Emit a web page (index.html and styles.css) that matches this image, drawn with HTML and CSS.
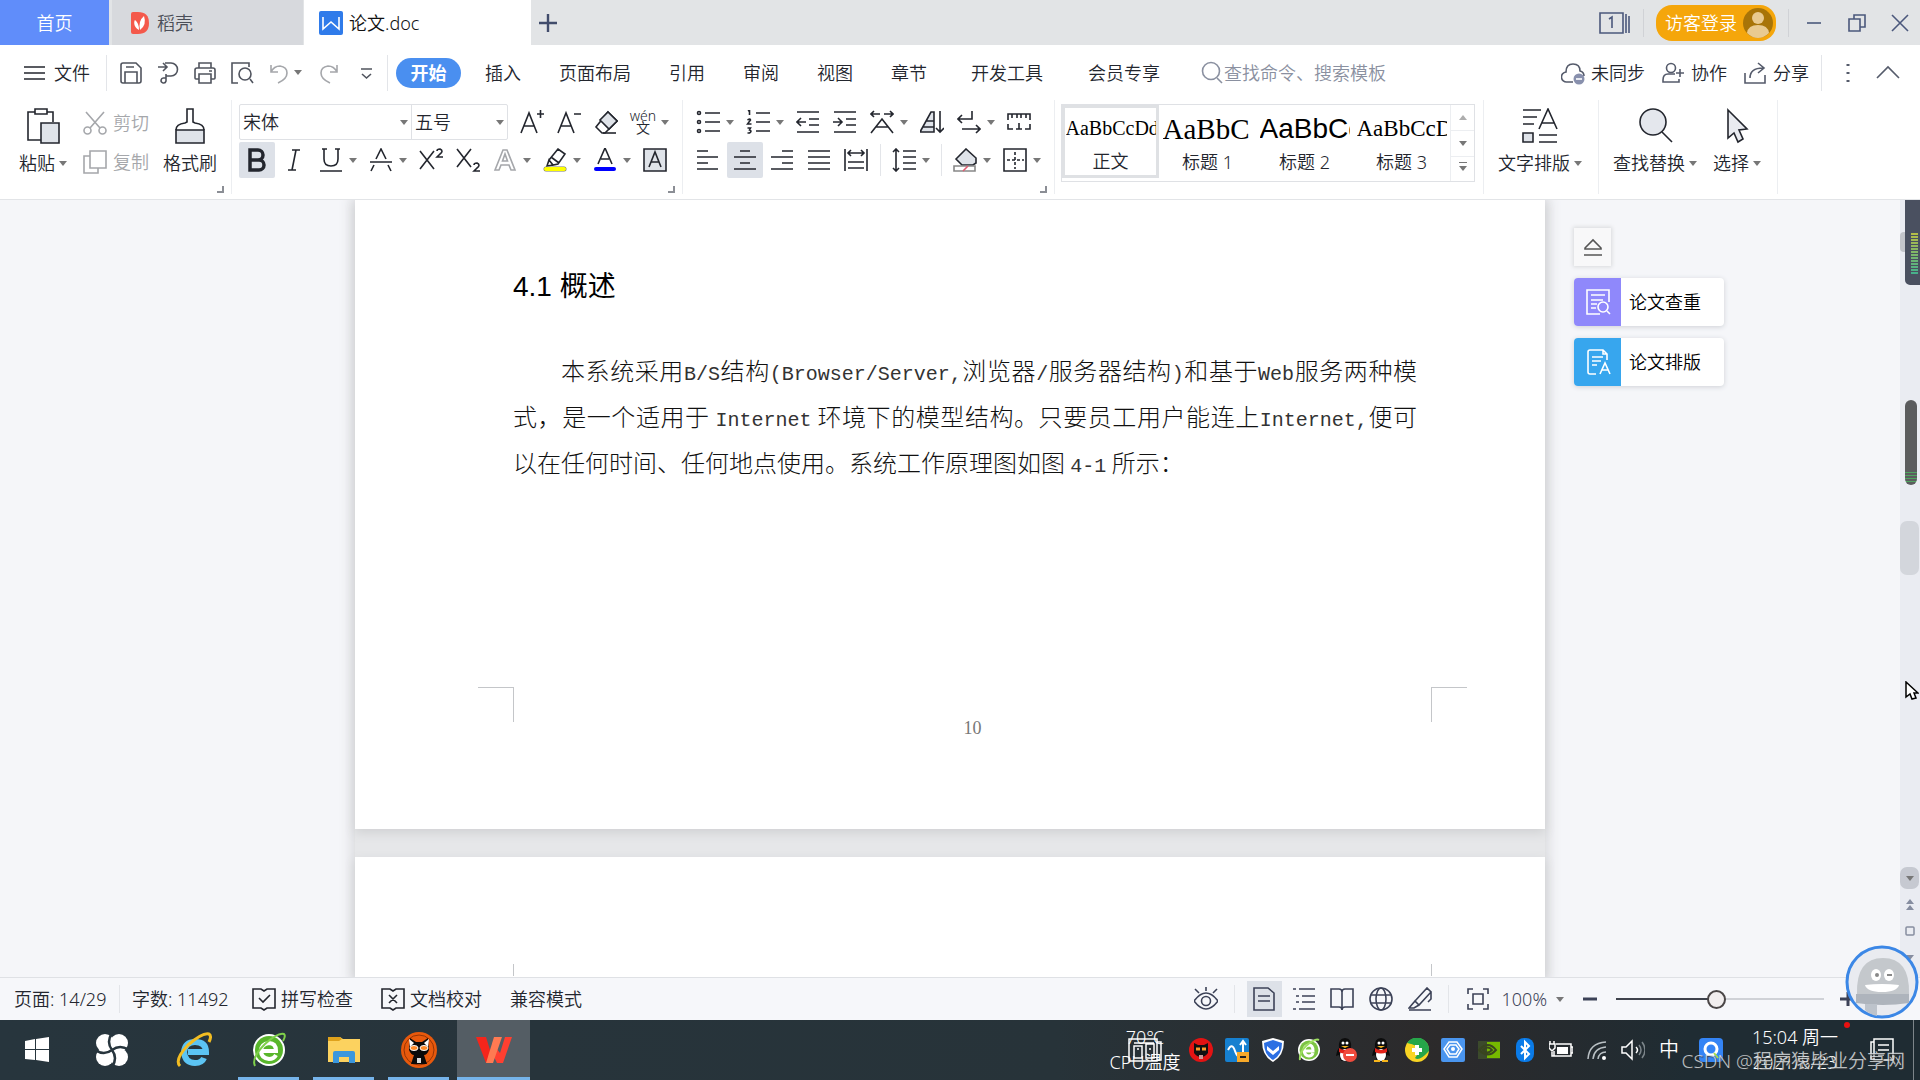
FILE: index.html
```html
<!DOCTYPE html>
<html lang="zh-CN">
<head>
<meta charset="utf-8">
<title>论文.doc</title>
<link rel="stylesheet" href="styles.css">
</head>
<body>
<header class="tabs">
  <button class="tab home">首页</button>
  <button class="tab docer"><svg width="18" height="22" viewBox="0 0 18 22"><path d="M0 2q0-2 2-2h5q11 0 11 11T7 22H2q-2 0-2-2z" fill="#f4594b"/><path d="M8 18C2 15 3 9 4 8q4 3 4 10zM9 18Q7 9 13 4q3 9-4 14z" fill="#fff"/></svg>稻壳</button>
  <button class="tab active"><svg width="24" height="24" viewBox="0 0 24 24"><rect width="24" height="24" rx="2" fill="#2f7bea"/><path d="M4 6v12l8-7 8 7V6" fill="none" stroke="#fff" stroke-width="1.600"/></svg>论文.doc</button>
  <button class="plus" aria-label="新建"><svg width="18" height="18" viewBox="0 0 18 18"><path d="M9 0v18M0 9h18" stroke="#414c6b" stroke-width="2.4"/></svg></button>
  <div class="win">
    <button class="count" aria-label="窗口"><svg width="32" height="24" viewBox="0 0 32 24" class="ln"><path d="M1 2h23v20H1zM27 3v19M30 5v17M10 8l3-2v11"/></svg></button>
    <i class="sep"></i>
    <button class="login">访客登录<svg width="30" height="30" viewBox="0 0 30 30"><circle cx="15" cy="15" r="15" fill="#a87408"/><circle cx="15" cy="10" r="6" fill="#e9ca90"/><path d="M4 25q1-8 11-8t11 8q-5 5-11 5T4 25z" fill="#e9ca90"/></svg></button>
    <i class="sep"></i>
    <button aria-label="最小化"><svg width="18" height="18" viewBox="0 0 18 18" class="ln"><path d="M2 9h14"/></svg></button>
    <button aria-label="还原"><svg width="18" height="18" viewBox="0 0 18 18" class="ln"><path d="M1 5h11v12H1zM6 5V1h11v12h-5"/></svg></button>
    <button aria-label="关闭"><svg width="18" height="18" viewBox="0 0 18 18" class="ln"><path d="M1 1l16 16M17 1L1 17"/></svg></button>
  </div>
</header>

<nav class="menu">
  <button class="file"><svg class="ic" width="22" height="18" viewBox="0 0 22 18"><path d="M0 3h21M0 9h21M0 15h21"/></svg>文件</button>
  <i class="sep"></i>
  <div class="quick">
    <button aria-label="保存"><svg class="ic" viewBox="0 0 24 24"><path d="M2 4q0-2 2-2h13l5 5v13q0 2-2 2H4q-2 0-2-2zM6 22V11h12v11M7 6h8"/></svg></button>
    <button aria-label="输出"><svg class="ic" viewBox="0 0 24 24"><path d="M2 6h8M7 2l4 4-4 4M9 2h6a6.500 6.500 0 0 1 0 13h-5M10 13v7a2.500 2.500 0 1 1-2-3h2"/></svg></button>
    <button aria-label="打印"><svg class="ic" viewBox="0 0 24 24"><path d="M6 7V2h12v5M6 18H3q-1 0-1-1V9q0-2 2-2h16q2 0 2 2v8q0 1-1 1h-3M6 13h12v9H6zM16 10h3"/></svg></button>
    <button aria-label="预览"><svg class="ic" viewBox="0 0 24 24"><path d="M8 22H2V2h17v4M20 18l3 4"/><circle cx="15" cy="13" r="6"/></svg></button>
    <button class="dim" aria-label="撤销"><svg class="ic" viewBox="0 0 24 24"><path d="M4 4v7h7M4 11q3-6 9-6 7 1 7 7t-9 10"/></svg></button>
    <i class="car"></i>
    <button class="dim" aria-label="恢复"><svg class="ic" viewBox="0 0 24 24"><path d="M20 4v7h-7M20 11q-3-6-9-6-7 1-7 7t9 10"/></svg></button>
    <button aria-label="更多"><svg class="ic" viewBox="0 0 24 24"><path d="M7 8h11M8 13l4.500 4 4.500-4"/></svg></button>
  </div>
  <i class="sep"></i>
  <div class="items">
    <button class="on">开始</button><button>插入</button><button>页面布局</button><button>引用</button><button>审阅</button><button>视图</button><button>章节</button><button class="wide">开发工具</button><button class="wide">会员专享</button>
  </div>
  <label class="search"><svg class="ic" viewBox="0 0 24 24"><circle cx="11" cy="10" r="8.500"/><path d="M17 17l5 5"/></svg><input type="text" placeholder="查找命令、搜索模板"></label>
  <div class="share">
    <button><svg class="ic" viewBox="0 0 24 24"><path d="M12 21H6a5 5 0 0 1-1-10Q5 3 12 3t7 7q4 1 4 5"/><circle cx="18" cy="18" r="5.500" fill="#8890ad" stroke="none"/><path d="M15 18h6" stroke="#fff"/></svg>未同步</button>
    <button><svg class="ic" viewBox="0 0 24 24"><circle cx="10" cy="7" r="4.500"/><path d="M14 13H7q-5 0-5 6v2h16v-3M15 12h8M19 8v8"/></svg>协作</button>
    <button><svg class="ic" viewBox="0 0 24 24"><path d="M2 12v10h20v-8M7 17q0-10 13-10M15 2l6 5-6 5"/></svg>分享</button>
  </div>
  <i class="sep"></i>
  <button class="end" aria-label="更多"><svg class="ic" viewBox="0 0 24 24"><path d="M12 3v2M12 11v2M12 19v2" stroke-width="3"/></svg></button>
  <button class="end" aria-label="折叠"><svg class="ic" viewBox="0 0 24 24"><path d="M1 17L12 6l11 11"/></svg></button>
</nav>

<section class="ribbon">
  <div class="clip">
    <button class="big"><svg class="ic" width="36" height="36" viewBox="0 0 36 36"><path d="M10 4H3v28h13M22 4h6v10M10 1h12v5H10z"/><path d="M16 15h18v20H16z" fill="#dfe3e9"/></svg><span>粘贴<i class="car"></i></span></button>
    <div class="two dim">
      <button><svg class="ic" viewBox="0 0 24 24"><path d="M3 1l14 16M21 1L7 17"/><circle cx="4.500" cy="19.500" r="3.500"/><circle cx="19.500" cy="19.500" r="3.500"/></svg>剪切</button>
      <button><svg class="ic" viewBox="0 0 24 24"><path d="M7 1h16v17H7zM7 6H1v17h14v-5"/></svg>复制</button>
    </div>
    <button class="big painter"><svg class="ic" width="36" height="36" viewBox="0 0 36 36"><path d="M4 22h28v13H4z" fill="#dfe3e9"/><path d="M4 22q0-6 9-7l2-1V1h6v13l2 1q9 1 9 7"/></svg><span>格式刷</span></button>
    <i class="corner"></i>
  </div>
  <div class="group">
    <div class="row">
      <div class="pick"><label class="name"><select aria-label="字体"><option>宋体</option></select></label><label class="size"><select aria-label="字号"><option>五号</option></select></label></div>
      <button class="b first" aria-label="增大字号"><svg class="ic" viewBox="0 0 24 24"><path d="M1 23L9 3l8 20M4 16h10M17 4h7M20.500 0v8"/></svg></button>
      <button class="b" aria-label="减小字号"><svg class="ic" viewBox="0 0 24 24"><path d="M1 23L9 3l8 20M4 16h10M17 4h7"/></svg></button>
      <button class="b" aria-label="清除格式"><svg class="ic" viewBox="0 0 24 24"><path d="M14 2l9 9-12 12H8l-6-6z"/><path d="M14 2l9 9-8 8-9-9z" fill="#dfe3e9"/><path d="M9 23h13"/></svg></button>
      <button class="d wen"><span>wén<br>文</span><i class="car"></i></button>
    </div>
    <div class="row">
      <button class="b on" aria-label="加粗"><svg class="ic" viewBox="0 0 24 24"><path d="M5 2h8a5 5 0 0 1 0 10H5zM5 12h9a5 5 0 0 1 0 10H5z" stroke-width="3.500"/></svg></button>
      <button class="b" aria-label="倾斜"><svg class="ic" viewBox="0 0 24 24"><path d="M10 2h8M6 22h8M14 2l-4 20"/></svg></button>
      <button class="d" aria-label="下划线"><svg class="ic" viewBox="0 0 24 24"><path d="M3 1h5M16 1h5M5 1v10q0 7 7 7t7-7V1M1 23h22"/></svg><i class="car"></i></button>
      <button class="d" aria-label="删除线"><svg class="ic" viewBox="0 0 24 24"><path d="M1 14h22M7 11l5-10 5 10M5 17l-3 6M19 17l3 6"/></svg><i class="car"></i></button>
      <button class="b" aria-label="上标"><svg class="ic" viewBox="0 0 24 24"><path d="M1 3l14 18M15 3L1 21M18 3q0-2 3-2 4 2 0 5l-3 3h6"/></svg></button>
      <button class="b" aria-label="下标"><svg class="ic" viewBox="0 0 24 24"><path d="M1 1l14 18M15 1L1 19M18 17q0-2 3-2 4 2 0 5l-3 3h6"/></svg></button>
      <button class="d dim" aria-label="文字效果"><svg class="ic" viewBox="0 0 24 24"><path d="M2 22L10 2h4l8 20h-4l-2-5H8l-2 5zM9.500 13h5L12 6z"/></svg><i class="car"></i></button>
      <button class="d" aria-label="突出显示"><svg class="ic" viewBox="0 0 24 24"><path d="M6 12L15 1l7 5-7 10-5 1zM6 12l4 5-6 1zM8 9l8 6"/><path d="M3 21h18" stroke="#777" stroke-width="5" stroke-linecap="round"/><path d="M3 21h18" stroke="#ff0" stroke-width="4" stroke-linecap="round"/></svg><i class="car"></i></button>
      <button class="d" aria-label="字体颜色"><svg class="ic" viewBox="0 0 24 24"><path d="M5 16L12 0l7 16M8 11h8"/><path d="M3 21h18" stroke="#00f" stroke-width="4" stroke-linecap="round"/></svg><i class="car"></i></button>
      <button class="b" aria-label="字符底纹"><svg class="ic" viewBox="0 0 24 24"><path d="M1 1h22v22H1z" fill="#dfe3e9"/><path d="M6 19l6-15 6 15M8 14h8"/></svg></button>
    </div>
    <i class="corner"></i>
  </div>
  <div class="group">
    <div class="row">
      <button class="d" aria-label="项目符号"><svg class="ic" viewBox="0 0 24 24"><path d="M9 3h15M9 12h15M9 21h15"/><circle cx="3" cy="3" r="1.500"/><circle cx="3" cy="12" r="1.500"/><circle cx="3" cy="21" r="1.500"/></svg><i class="car"></i></button>
      <button class="d" aria-label="编号"><svg class="ic" viewBox="0 0 24 24"><path d="M10 3h14M10 12h14M10 21h14M2 1l1.500-1v5M1.500 10q3-2 3 0l-3 4h4M1.500 18h3l-1 2q3 1 0 3h-2"/></svg><i class="car"></i></button>
      <button class="b" aria-label="减少缩进"><svg class="ic" viewBox="0 0 24 24"><path d="M1 2h22M13 9h10M13 15h10M1 22h22M1 12h9M5 8l-4 4 4 4"/></svg></button>
      <button class="b" aria-label="增加缩进"><svg class="ic" viewBox="0 0 24 24"><path d="M1 2h22M13 9h10M13 15h10M1 22h22M0 12h9M5 8l4 4-4 4"/></svg></button>
      <button class="d" aria-label="字符缩放"><svg class="ic" viewBox="0 0 24 24"><path d="M1 23l11-14 11 14M6 17h12M1 4h9M14 4h9M4 1L1 4l3 3M20 1l3 3-3 3"/></svg><i class="car"></i></button>
      <button class="b" aria-label="排序"><svg class="ic" viewBox="0 0 24 24"><path d="M0 22L11 2h3v20zM6 11h8M3 17h11" fill="#dfe3e9"/><path d="M20 1v21M16 18l4 4 4-4"/></svg></button>
      <button class="d" aria-label="换行"><svg class="ic" viewBox="0 0 24 24"><path d="M15 1v8H1M5 5L1 9l4 4M5 19h18M19 15l4 4-4 4"/></svg><i class="car"></i></button>
      <button class="b" aria-label="标尺"><svg class="ic" viewBox="0 0 24 24"><path d="M1 10V4h22v6M5 4v4M10 4v4M14 4v4M19 4v4M1 14v5h5M23 14v5h-5M12 13v6M9 19h6"/></svg></button>
    </div>
    <div class="row">
      <button class="b" aria-label="左对齐"><svg class="ic" viewBox="0 0 24 24"><path d="M1 3h11M1 9h21M1 15h11M1 21h21"/></svg></button>
      <button class="b on" aria-label="居中"><svg class="ic" viewBox="0 0 24 24"><path d="M7 3h10M1 9h22M7 15h10M1 21h22"/></svg></button>
      <button class="b" aria-label="右对齐"><svg class="ic" viewBox="0 0 24 24"><path d="M12 3h11M1 9h22M12 15h11M1 21h22"/></svg></button>
      <button class="b" aria-label="两端对齐"><svg class="ic" viewBox="0 0 24 24"><path d="M1 3h22M1 9h22M1 15h22M1 21h22"/></svg></button>
      <button class="b" aria-label="分散对齐"><svg class="ic" viewBox="0 0 24 24"><path d="M1 1v22M23 1v22M4 5h16M7 2L4 5l3 3M17 2l3 3-3 3M4 14h16M4 20h16"/></svg></button>
      <i class="bar"></i>
      <button class="d" aria-label="行距"><svg class="ic" viewBox="0 0 24 24"><path d="M4 1v22M1 4l3-3 3 3M1 20l3 3 3-3M11 3h13M11 9h13M11 15h13M11 21h13"/></svg><i class="car"></i></button>
      <i class="bar"></i>
      <button class="d" aria-label="底纹"><svg class="ic" viewBox="0 0 24 24"><path d="M3 11L13 1l10 9v5l-3 2H9z" fill="#dfe3e9"/><path d="M1 18h21v5H1z" stroke="#888" fill="#fff"/><path d="M10 23l5-5" stroke="#e05a70"/></svg><i class="car"></i></button>
      <button class="d" aria-label="边框"><svg class="ic" viewBox="0 0 24 24"><path d="M1 1h22v22H1z"/><path d="M12 4v17M4 12h17" stroke-dasharray="3 2"/></svg><i class="car"></i></button>
    </div>
    <i class="corner"></i>
  </div>
  <div class="styles">
    <div class="gallery">
      <button class="style sel"><span class="s1">AaBbCcDd</span>正文</button>
      <button class="style"><span class="s2">AaBbC</span>标题 1</button>
      <button class="style"><span class="s3">AaBbCc</span>标题 2</button>
      <button class="style"><span class="s4">AaBbCcDd</span>标题 3</button>
      <div class="updown"><button aria-label="上"><i class="car up"></i></button><button aria-label="下"><i class="car"></i></button><button aria-label="展开"><i class="car line"></i></button></div>
    </div>
  </div>
  <div class="tail one">
    <button class="big"><svg class="ic" width="36" height="36" viewBox="0 0 36 36"><path d="M1 2h18M1 9h14M1 16h11M17 21l9-20 9 20M20 15h12M17 27h18M17 34h18"/><path d="M1 25h10v9H1z" fill="#dfe3e9"/></svg><span>文字排版<i class="car"></i></span></button>
  </div>
  <div class="tail pair">
    <button class="big"><svg class="ic" width="36" height="36" viewBox="0 0 36 36"><circle cx="16" cy="14" r="13" fill="#e4e7ed"/><path d="M25 24l10 10"/></svg><span>查找替换<i class="car"></i></span></button>
    <button class="big"><svg class="ic" width="36" height="36" viewBox="0 0 36 36"><path d="M9 2l19 19-8 1 4 9-5 3-4-9-6 5z" fill="#e9ebf0"/></svg><span>选择<i class="car"></i></span></button>
  </div>
</section>

<main class="work">
  <div class="pages">
    <article class="page">
      <div class="text">
        <h1>4.1 概述</h1>
        <p><span class="full indent">本系统采用<b>B/S</b>结构<b>(Browser/Server,</b>浏览器<b>/</b>服务器结构<b>)</b>和基于<b>Web</b>服务两种模</span><span class="full">式，是一个适用于 <b>Internet</b> 环境下的模型结构。只要员工用户能连上<b>Internet,</b>便可</span><span>以在任何时间、任何地点使用。系统工作原理图如图 <b>4-1</b> 所示：</span></p>
      </div>
      <div class="marks"><i></i><span class="num">10</span><i class="r"></i></div>
    </article>
    <article class="page next"><div class="marks"><i></i><i class="r"></i></div></article>
  </div>
  <aside class="float">
    <button class="eject" aria-label="收起"><svg class="ic" width="20" height="20" viewBox="0 0 20 20"><path d="M2 11l8-8 8 8v1H2zM1 18h18"/></svg></button>
    <button class="card"><i class="purple"><svg class="ic" width="26" height="26" viewBox="0 0 26 26"><path d="M15 25H2V1h22v12M6 6h14M6 11h12M6 15h6M6 19h5M22 22l3 3"/><circle cx="18" cy="18" r="5"/></svg></i>论文查重</button>
    <button class="card"><i class="blue"><svg class="ic" width="26" height="26" viewBox="0 0 26 26"><path d="M11 25H5q-2 0-2-2V3q0-2 2-2h13l4 4v6M18 1v4h4M7 8h11M7 12h9M7 16h5M15 25l5-11 5 11M17 21h6"/></svg></i>论文排版</button>
  </aside>
  <div class="scroll">
    <i class="nub"></i><i class="meter"></i><i class="gauge"></i><i class="thumb"></i>
    <svg class="cursor" width="14" height="20" viewBox="0 0 14 20"><path d="M1 1v15l4-3 2 5 4-1-2-5h4z" fill="#fff" stroke="#000" stroke-width="1.500"/></svg>
    <button class="down" aria-label="下"><i class="car"></i></button>
    <svg class="pagers" width="14" height="74" viewBox="0 0 14 74"><path d="M3 6l4-5 4 5zM3 12l4-5 4 5zM3 57h8l-4 5z" fill="#868da0"/><rect x="3" y="29" width="8" height="8" rx="1" fill="none" stroke="#868da0" stroke-width="1.500"/></svg>
  </div>
</main>

<footer class="status">
  <span class="pg">页面: 14/29</span><i class="sep"></i><span class="wc">字数: 11492</span>
  <button class="spell"><svg class="ic" viewBox="0 0 24 24"><path d="M1 2h8l3 2 3-2h8v19h-8l-3 2-3-2H1zM7 11l4 4 7-7"/></svg>拼写检查</button>
  <button class="proof"><svg class="ic" viewBox="0 0 24 24"><path d="M1 2h8l3 2 3-2h8v19h-8l-3 2-3-2H1zM8 8l8 8M16 8l-8 8"/></svg>文档校对</button>
  <span>兼容模式</span>
  <div class="views">
    <button class="eye" aria-label="护眼"><svg class="ic" viewBox="0 0 24 24"><path d="M0 14q12-16 24 0-12 16-24 0zM12 4V0M5 6L1 2M19 6l4-4"/><circle cx="12" cy="14" r="4.500"/></svg></button>
    <i class="sep"></i>
    <button class="on" aria-label="页面视图"><svg class="ic" viewBox="0 0 24 24"><path d="M2 1h14l6 5v17H2zM6 9h12M6 14h12"/></svg></button>
    <button aria-label="大纲"><svg class="ic" viewBox="0 0 24 24"><path d="M2 2h3M8 2h16M5 9h3M11 9h13M5 15h3M11 15h13M2 22h3M8 22h16"/></svg></button>
    <button aria-label="阅读"><svg class="ic" viewBox="0 0 24 24"><path d="M1 2h8q3 0 3 3 0-3 3-3h8v18h-8q-3 0-3 3 0-3-3-3H1zM12 5v17"/></svg></button>
    <button aria-label="Web"><svg class="ic" viewBox="0 0 24 24"><circle cx="12" cy="12" r="11"/><ellipse cx="12" cy="12" rx="5" ry="11"/><path d="M2 8h20M2 16h20"/></svg></button>
    <button aria-label="写作"><svg class="ic" viewBox="0 0 24 24"><path d="M7 14L19 1l4 4-12 13zM7 14l4 4-5 3H1zM1 23h22M23 5v7l-3 3"/></svg></button>
    <i class="sep"></i>
    <button class="fit" aria-label="适应"><svg class="ic" viewBox="0 0 24 24"><path d="M2 7V2h5M17 2h5v5M22 17v5h-5M7 22H2v-5M7 7h10v10H7z"/></svg></button>
    <button class="pct">100%<i class="car"></i></button>
    <button class="zo" aria-label="缩小"><svg width="16" height="16" viewBox="0 0 16 16"><path d="M1 8h14" stroke="#3c4257" stroke-width="3"/></svg></button>
    <input type="range" min="0" max="100" value="48" aria-label="缩放">
    <button class="zi" aria-label="放大"><svg width="16" height="16" viewBox="0 0 16 16"><path d="M0 8h16M8 1v14" stroke="#3c4257" stroke-width="3"/></svg></button>
  </div>
</footer>

<footer class="taskbar">
  <div class="apps">
    <button aria-label="开始"><svg width="26" height="26" viewBox="0 0 26 26"><path d="M1 4l10-2v10H1zM12 2l13-2v12H12zM1 13h10v10l-10-1zM12 13h13v12l-13-2z" fill="#fff"/></svg></button>
    <button aria-label="工具"><svg width="34" height="34" viewBox="0 0 34 34"><g fill="#fff"><circle cx="10" cy="10" r="9"/><circle cx="24" cy="10" r="9"/><circle cx="10" cy="24" r="9"/><circle cx="24" cy="24" r="9"/><path d="M10 10h14v14H10z"/></g><g fill="none" stroke="#27353d" stroke-width="2.500"><path d="M17 17q-6-8 0-17M17 17q8-6 17 0M17 17q6 8 0 17M17 17q-8 6-17 0"/></g></svg></button>
    <button aria-label="IE"><svg width="36" height="36" viewBox="0 0 36 36"><path d="M12 20h18q0-10-11-10-10 0-11 10 1 11 11 11 7 0 9-5" fill="none" stroke="#5cc4f3" stroke-width="6"/><path d="M4 34Q-2 28 12 13 27 0 33 2q3 2 0 8" fill="none" stroke="#f3bd22" stroke-width="3"/></svg></button>
    <button class="run" aria-label="浏览器"><svg width="36" height="36" viewBox="0 0 36 36"><circle cx="18" cy="18" r="16" fill="#fff"/><circle cx="18" cy="18" r="14" fill="#59b62b"/><path d="M11 19h14q0-8-7-8-8 1-8 8t8 8q5 0 7-4" fill="none" stroke="#fff" stroke-width="4"/><path d="M4 34Q0 26 14 12 27 0 33 2q2 2-1 7" fill="none" stroke="#7fd04a" stroke-width="2"/></svg></button>
    <button class="run" aria-label="资源管理器"><svg width="34" height="28" viewBox="0 0 34 28"><path d="M1 1h12l3 2h17v23H1z" fill="#fcd25f"/><path d="M1 1h12l2 2-3 2H1z" fill="#dfa21c"/><path d="M6 27V17q0-2 2-2h18q2 0 2 2v10h-6v-6H12v6z" fill="#3b97dd"/></svg></button>
    <button class="run" aria-label="录屏"><svg width="36" height="36" viewBox="0 0 36 36"><circle cx="18" cy="18" r="18" fill="#e8590c"/><circle cx="18" cy="18" r="15" fill="none" stroke="#963405"/><path d="M9 6l6 4h6l6-4 1 12q-2 5-5 5l3 9H10l3-9q-3 0-5-5z" fill="#0b0a0a"/><path d="M8 7l5 4-4 4zM28 7l-5 4 4 4z" fill="#fff"/><ellipse cx="13" cy="16" rx="4" ry="2.500" fill="#ff8a2a" stroke="#fff"/><ellipse cx="23" cy="16" rx="4" ry="2.500" fill="#ff8a2a" stroke="#fff"/><path d="M16 26h4v5h-4z" fill="#ddd"/></svg></button>
    <button class="run cur" aria-label="WPS"><svg width="36" height="28" viewBox="0 0 36 28"><path d="M0 1h10l4 13 2 6-3 7H10z" fill="#f5251b"/><path d="M20 12l4 5 5-16h7l-9 26h-6l-4-8z" fill="#ff3f30"/><path d="M18 1h8l-9 26h-7z" fill="#ff7a52"/></svg></button>
  </div>
  <div class="tray">
    <div class="cpu"><span>70℃</span><span>CPU温度</span><svg width="36" height="26" viewBox="0 0 36 26"><path d="M2 2h28v22H2zM30 5h4v18h-4M7 9h8v12H7zM19 7h8v14h-8zM10 12h2M22 12h2M7 6h20" fill="none" stroke="#fff" stroke-width="1.500"/></svg></div>
    <svg viewBox="0 0 24 24"><circle cx="12" cy="12" r="12" fill="#e31313"/><path d="M5 5l4 2h6l4-2v10q-3 4-7 4t-7-4z" fill="#111"/><path d="M7 11h4M13 11h4" stroke="#ff9b2a" stroke-width="3"/><path d="M10 17h4v4h-4z" fill="#c99"/></svg>
    <svg viewBox="0 0 24 24"><rect width="24" height="24" rx="2" fill="#1680d0"/><path d="M3 12q4-8 7 1t8 4V4M15 7l3-4 3 4" fill="none" stroke="#fff" stroke-width="2"/><path d="M12 14h12v10H12z" fill="#f7a929"/><path d="M15 19h6" stroke="#222" stroke-width="2"/></svg>
    <svg viewBox="0 0 24 24"><path d="M1 3l11-3 11 3q0 15-11 21Q1 18 1 3z" fill="#fff"/><path d="M3 5l9-3 9 3q0 12-9 17Q3 17 3 5z" fill="#2c6fe3"/><path d="M6 8l6 5 6-5v4l-6 5-6-5z" fill="#fff"/></svg>
    <svg viewBox="0 0 24 24"><circle cx="12" cy="12" r="11" fill="#fff"/><circle cx="12" cy="12" r="9.500" fill="#7cc443"/><path d="M8 13h8q0-6-4-6-5 1-5 6 1 5 5 5 3 0 4-3" fill="none" stroke="#fff" stroke-width="3"/><path d="M3 22Q2 15 9 8 18 0 22 2" fill="none" stroke="#9ee060" stroke-width="2"/></svg>
    <svg viewBox="0 0 24 24"><path d="M3 18Q4 12 6 10 5 0 12 0t6 10q2 2 3 8l-3-1-2 6H8l-2-6z" fill="#0c0c0c"/><ellipse cx="12" cy="17" rx="5" ry="6" fill="#fff"/><path d="M6 10q6 4 12 0v4q-6 3-12 0z" fill="#e2231a"/><circle cx="10" cy="5" r="1.500" fill="#fff"/><circle cx="14" cy="5" r="1.500" fill="#fff"/><path d="M8 8h8l-4 2z" fill="#f7b51b"/><circle cx="17" cy="17" r="7" fill="#f04b3d"/><path d="M13 17h8" stroke="#fff" stroke-width="2"/></svg>
    <svg viewBox="0 0 24 24"><path d="M3 18Q4 12 6 10 5 0 12 0t6 10q2 2 3 8l-3-1-2 6H8l-2-6z" fill="#0c0c0c"/><ellipse cx="12" cy="17" rx="5" ry="6" fill="#fff"/><path d="M6 10q6 4 12 0v4q-6 3-12 0z" fill="#e2231a"/><circle cx="10" cy="5" r="1.500" fill="#fff"/><circle cx="14" cy="5" r="1.500" fill="#fff"/><path d="M8 8h8l-4 2zM5 22h6v2H5zM13 22h6v2h-6z" fill="#f7b51b"/></svg>
    <svg viewBox="0 0 24 24"><circle cx="12" cy="12" r="12" fill="#f9d423"/><path d="M2 5A12 12 0 0 1 24 13Q14 24 10 20 20 8 2 5z" fill="#26a64a"/><path d="M12 7v10M7 12h10" stroke="#fff" stroke-width="4"/></svg>
    <svg viewBox="0 0 24 24"><rect width="24" height="24" rx="2" fill="#4a95ee"/><path d="M8 4h8l5 7-5 8H8l-5-8zM9 7h6l3 4-3 5H9l-3-5z" fill="none" stroke="#fff" stroke-width="1.500"/><circle cx="12" cy="11" r="2" fill="#fff"/></svg>
    <svg viewBox="0 0 24 24"><path d="M1 3h22v18H1z" fill="#3c4a2c"/><path d="M10 4h13v16H10z" fill="#76b900"/><path d="M2 12q9-10 17 0-8 9-17 0zM6 12q5-5 9 0-5 5-9 0z" fill="none" stroke="#39451f" stroke-width="2"/></svg>
    <svg viewBox="0 0 24 24"><rect x="3" width="18" height="24" rx="8" fill="#0a7be8"/><path d="M8 8l8 8-4 4V4l4 4-8 8" fill="none" stroke="#fff" stroke-width="2"/></svg>
    <svg viewBox="0 0 24 24"><path d="M7 6h15v12H5v-5M22 9h2v6h-2M0 6h6v4l-3 3-3-3zM1 3v3M5 3v3M3 12v6h2" fill="none" stroke="#fff" stroke-width="1.500"/><path d="M8 9h11v7H8z" fill="#fff"/></svg>
    <svg viewBox="0 0 24 24"><g fill="none" stroke="#b9c0c4" stroke-width="1.500"><path d="M3 21Q4 5 21 4M8 21Q9 10 21 9M13 21q1-7 8-7"/></g><circle cx="19" cy="20" r="2" fill="#fff"/></svg>
    <svg viewBox="0 0 24 24"><path d="M1 9h4l6-6v18l-6-6H1zM15 9q3 3 0 6" fill="none" stroke="#fff" stroke-width="1.500"/><path d="M18 7q4 5 0 10M21 4q6 8 0 16" fill="none" stroke="#7c858a" stroke-width="1.500"/></svg>
    <span class="ime">中</span>
    <svg class="qq" viewBox="0 0 24 24"><rect width="24" height="24" rx="4" fill="#3484f5"/><circle cx="12" cy="11" r="6" fill="none" stroke="#fff" stroke-width="3"/><path d="M15 15l4 5" stroke="#a6dc4b" stroke-width="2"/></svg>
    <time><span>15:04 周一</span><span>2021/8/23</span></time>
    <svg class="note" viewBox="0 0 24 24"><path d="M4 1h19v21H4zM4 4H1v17h3M8 7h11M8 12h11M8 17h6" fill="none" stroke="#fff" stroke-width="1.500"/></svg>
    <i class="desk"></i>
  </div>
  <div class="mark">CSDN @程序猿毕业分享网</div>
  <i class="dot"></i>
</footer>

<svg class="robot" width="74" height="76" viewBox="0 0 74 76"><circle cx="37" cy="38" r="35" fill="#e9ebf0" stroke="#3b87e6" stroke-width="3"/><path d="M12 50Q11 14 38 14t26 36z" fill="#c4c8cc"/><path d="M11 50h53v9q-26 4-53 0z" fill="#aeb4bc"/><path d="M20 60h12v12q-8-2-12-6z" fill="#bdc3cb"/><ellipse cx="31" cy="31" rx="5" ry="6" fill="#fff"/><ellipse cx="44" cy="31" rx="5" ry="6" fill="#fff"/><circle cx="32" cy="31" r="2" fill="#888"/><path d="M42 31h5" stroke="#888" stroke-width="2"/><path d="M20 41q17-2 34 0-2 7-17 7t-17-7z" fill="#fff"/></svg>
</body>
</html>
```
FILE: styles.css
```css
* { box-sizing: border-box; }
body {
  margin: 0; min-height: 100vh; display: flex; flex-direction: column; position: relative; overflow: hidden;
  font: 350 18px/24px "Noto Sans", "Noto Sans CJK SC", sans-serif; color: #23262e; background: #fff;
}
button, input, select { font: inherit; color: inherit; background: none; border: 0; padding: 0; margin: 0; white-space: nowrap; }
button { display: flex; align-items: center; justify-content: center; flex: none; }
svg { display: block; flex: none; }
.ic { fill: none; stroke: currentColor; stroke-width: 1.6; }
.ic:not([width]) { width: 24px; height: 24px; }
.ln { fill: none; stroke: #4b587c; stroke-width: 1.6; }
.dim { color: #a5a7ab; }
.sep { width: 1px; flex: none; background: #e3e5e9; }
.car { width: 0; height: 0; flex: none; border: 4px solid transparent; border-top: 5px solid #777; border-bottom: 0; }

/* document tabs */
.tabs { display: flex; height: 45px; background: #e2e4e6; }
.tab { justify-content: flex-start; gap: 8px; }
.home { width: 109px; justify-content: center; background: #608dfa; color: #fff; }
.docer { width: 191px; margin: 0 1px 0 3px; padding-left: 19px; background: #d7d9dd; color: #4a4e58; }
.active { width: 227px; padding-left: 15px; gap: 6px; background: #fff; color: #111; }
.plus { width: 34px; }
.win { display: flex; align-items: center; margin-left: auto; padding-right: 11px; }
.win .sep { height: 28px; background: #d0d2d6; margin: 0 12px; }
.win > button:nth-last-child(-n+3) { margin-left: 25px; }
.win > button:nth-last-child(3) { margin-left: 4px; }
.login { height: 36px; padding: 0 3px 0 9px; gap: 6px; border-radius: 16px; background: #f5a60b; color: #fff; }

/* menu */
.menu { display: flex; align-items: center; height: 55px; }
.menu .sep { height: 36px; }
.file { gap: 8px; padding: 0 16px 0 24px; }
.quick { display: flex; align-items: center; padding: 0 8px 0 12px; gap: 13px; color: #50545e; width: 280px; }
.quick .car { margin: 0 2px 0 -10px; }
.items { display: flex; align-items: center; padding-left: 8px; }
.items button { height: 30px; padding: 0 19px; }
.items button:nth-child(2) { padding-left: 24px; }
.items .wide { padding: 0 20px 0 25px; }
.items .on { width: 65px; padding: 0; border-radius: 15px; background: #4a8ff0; color: #fff; font-weight: 700; }
.search { display: flex; align-items: center; flex: 1; min-width: 0; margin-left: 20px; color: #8a90a0; }
.search input { width: 180px; outline: 0; }
.search input::placeholder { color: #8a90a0; opacity: 1; }
.share { display: flex; gap: 16px; padding-right: 12px; }
.share button { gap: 6px; }
.share .ic, .end { color: #555b6b; }
.end { margin-left: 14px; }
.end:last-child { margin: 0 20px 0 16px; }

/* ribbon */
.ribbon { display: flex; height: 100px; padding-bottom: 5px; border-bottom: 1px solid #e2e4e7; flex: none; }
.ribbon > div { border-right: 1px solid #eceef1; position: relative; padding-top: 4px; flex: none; }
.corner { position: absolute; right: 7px; bottom: 1px; width: 7px; height: 7px; border: solid #8b8e95; border-width: 0 2px 2px 0; }
.big { flex-direction: column; justify-content: flex-start; gap: 8px; padding-top: 4px; }
.big span { display: flex; align-items: center; gap: 4px; line-height: 22px; }
.clip { display: flex; width: 232px; padding-left: 19px; }
.two { display: flex; flex-direction: column; gap: 2px; margin: 0 14px 0 16px; }
.two button { height: 37px; gap: 6px; }
.group { padding: 0 7px; display: flex; flex-direction: column; gap: 2px; }
.group:nth-child(2) { width: 451px; }
.group:nth-child(3) { width: 372px; }
.row { display: flex; height: 36px; }
.b { width: 36px; margin-right: 1px; border-radius: 2px; }
.d { width: 50px; padding-left: 6px; justify-content: flex-start; gap: 6px; }
.on { background: #dde1e8; }
.bar { width: 1px; margin: 2px 5px; background: #e3e5e9; }
.first { margin-left: 6px; }
.wen span { width: 24px; font-size: 14px; line-height: 12px; display: flex; justify-content: center; text-align: center; }
.pick { display: flex; width: 272px; border: 1px solid #dfe1e5; border-radius: 2px; }
.pick label { display: flex; align-items: center; padding: 0 3px; }
.pick label::after { content: ""; border: 4px solid transparent; border-top: 5px solid #777; border-bottom: 0; }
.pick select { appearance: none; flex: 1; }
.name { width: 172px; border-right: 1px solid #dfe1e5; }
.size { flex: 1; }
.styles { padding: 0 8px 0 6px; }
.gallery { display: flex; height: 78px; border: 1px solid #dfe1e5; }
.style { width: 97px; height: 73px; flex-direction: column; justify-content: flex-end; line-height: 28px; padding: 0 3px 2px; }
.style span { width: 90px; height: 38px; line-height: 38px; overflow: hidden; text-align: left; color: #000; font-family: "Liberation Serif", serif; font-weight: 400; }
.sel { border: 3px solid #dfe1e4; padding: 0; }
.s1 { font-size: 20px; }
.s2 { font-size: 29px; }
.style .s3 { font-size: 28px; font-family: "Liberation Sans", sans-serif; }
.s4 { font-size: 23px; }
.updown { display: grid; grid-template-rows: repeat(3, 1fr); width: 24px; border-left: 1px solid #eceef1; }
.updown button + button { border-top: 1px solid #eceef1; }
.up { transform: rotate(180deg); opacity: .6; }
.line { position: relative; }
.line::before { content: ""; position: absolute; left: -4px; top: -9px; width: 8px; height: 1px; background: #777; }
.one { padding: 0 16px 0 14px; }
.pair { display: flex; gap: 16px; padding: 0 16px 0 14px; }

/* document */
.work { flex: 1; min-height: 0; display: grid; grid-template-columns: minmax(0, 1fr) minmax(0, 1190px) minmax(0, 1fr) 20px; background: #f5f6f9; overflow: hidden; }
.pages { grid-column: 2; display: flex; flex-direction: column; gap: 28px; background: #e6e7e9; box-shadow: 0 0 12px 4px #d9dadd; }
.page { background: #fff; box-shadow: 0 4px 10px #d0d1d3; }
.text { padding: 67px 128px 0 158px; color: #000; }
h1 { margin: 0 0 40px; font: 28px/40px "Liberation Sans", "Noto Sans CJK SC", sans-serif; }
p { margin: 0; font: 300 24px/46px "Noto Sans CJK SC", sans-serif; color: #111; }
p span { display: block; height: 46px; }
.full { text-align: justify; text-align-last: justify; white-space: nowrap; }
.indent { padding-left: 48px; }
p b { font: 20px/40px "Liberation Mono", monospace; color: #333; }
.marks { display: flex; justify-content: space-between; padding: 202px 78px 89px 123px; }
.marks i { width: 36px; height: 35px; border: solid #c4c6c9; border-width: 1px 1px 0 0; }
.marks .r { border-width: 1px 0 0 1px; }
.num { font: 18px/24px "Liberation Serif", serif; color: #777; padding-top: 29px; }
.next { flex: 1; }
.next .marks { padding-top: 107px; padding-bottom: 0; }
.next .marks i { height: 12px; border-top: 0; }
.float { padding: 28px 0 0 29px; display: flex; flex-direction: column; align-items: flex-start; gap: 12px; color: #000; }
.eject { width: 37px; height: 38px; background: #f8f8f9; box-shadow: 0 0 4px 1px #d9dadc; color: #555; }
.card { width: 150px; height: 48px; justify-content: flex-start; gap: 8px; border-radius: 4px; background: #fff; box-shadow: 0 1px 5px #cfd1d6; overflow: hidden; }
.card i { width: 47px; height: 48px; display: grid; place-items: center; color: #fff; }
.purple { background: #8f88fb; }
.blue { background: #37a6ee; }
.scroll { position: relative; background: #eaecf2; }
.scroll > * { position: absolute; }
.nub { left: 0; top: 32px; width: 8px; height: 20px; background: #c3c5ca; border-radius: 4px; }
.meter { right: 0; top: -4px; width: 15px; height: 89px; border: solid #4a5060; border-width: 36px 2px 10px 6px; border-radius: 5px 0 0 5px; background: repeating-linear-gradient(#4a5060 0 1px, transparent 1px 3px), linear-gradient(#b9bd45, #43b08e); }
.gauge { left: 5px; top: 200px; width: 12px; height: 85px; border-radius: 6px; background: repeating-linear-gradient(#5b5c5e 0 2px, #4fa35f 2px 3px) 0 70px / 12px 12px no-repeat #5b5c5e; }
.thumb { left: 0; top: 321px; width: 19px; height: 54px; border-radius: 7px; background: #d3d6dc; }
.cursor { left: 5px; top: 481px; }
.down { left: 0; top: 667px; width: 19px; height: 22px; border-radius: 7px; background: #c6c9d1; }
.pagers { left: 3px; top: 698px; }

/* status bar */
.status { display: flex; align-items: center; height: 43px; border-top: 1px solid #dfe1e5; background: #f6f7fa; padding-left: 14px; flex: none; }
.status .sep { height: 28px; }
.pg { width: 105px; }
.wc { padding-left: 12px; width: 132px; }
.status > button { gap: 5px; width: 129px; justify-content: flex-start; }
.views { display: flex; align-items: center; margin-left: auto; padding-right: 64px; color: #3c4257; }
.views > button:not(.pct):not(.zo):not(.zi) { width: 35px; height: 36px; margin-right: 4px; }
.views .sep { margin: 0 12px 0 6px; }
.pct { gap: 9px; margin: 0 18px 0 2px; }
.views input { appearance: none; width: 208px; height: 20px; margin: 0 16px 0 18px; background: linear-gradient(90deg, #3f434c 48%, #d0d2d7 48%) center / 100% 2px no-repeat; }
.views input::-webkit-slider-thumb { appearance: none; width: 19px; height: 19px; border: 2px solid #4a4646; border-radius: 50%; background: #f1eeee; }
.robot { position: absolute; right: 1px; bottom: 60px; }

/* taskbar */
.taskbar { position: relative; display: flex; height: 60px; background: linear-gradient(90deg, #27353d, #273339 55%, #2c2a2b 75%, #1f2c33 88%); color: #fff; flex: none; }
.apps { display: flex; gap: 2px; }
.apps button { width: 73px; border-bottom: 3px solid transparent; border-top: 3px solid transparent; }
.apps button:nth-child(2) { margin-right: 7px; }
.apps .run { background: linear-gradient(#76b4ea, #76b4ea) center bottom / 61px 3px no-repeat border-box; }
.apps .cur { background: linear-gradient(#76b4ea, #76b4ea) center bottom / 100% 3px no-repeat border-box #545d64; }
.tray { display: flex; align-items: center; gap: 12px; margin-left: auto; }
.tray > svg { width: 24px; height: 24px; }
.cpu { position: relative; width: 72px; margin-right: -4px; text-align: center; }
.cpu span, time span { display: block; line-height: 25px; }
.cpu svg { position: absolute; left: 18px; top: 12px; }
.ime { width: 24px; font-size: 20px; text-align: center; }
.tray .qq { margin-left: 6px; }
time { width: 88px; margin-left: 16px; text-align: center; }
.tray .note { margin-left: 19px; }
.desk { width: 1px; height: 60px; margin: 0 6px 0 7px; background: #7d858a; }
.mark { position: absolute; right: 15px; bottom: 7px; font-size: 19px; color: #d5d9db; opacity: .85; text-shadow: 1px 1px 1px #333; }
.dot { position: absolute; right: 70px; top: 2px; width: 6px; height: 6px; border-radius: 3px; background: #e81010; }
```
